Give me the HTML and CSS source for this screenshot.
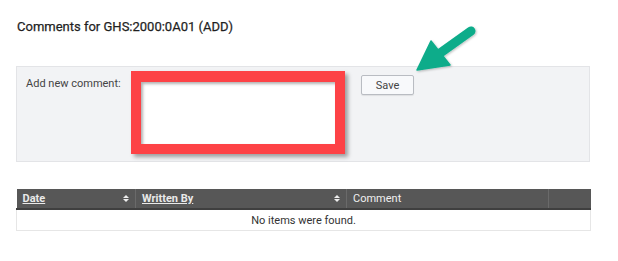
FILE: index.html
```html
<!DOCTYPE html>
<html lang="en">

<head>
    <meta charset="UTF-8" />
    <title>Comments</title>
    <link rel="stylesheet" href="styles.css">
</head>

<body>
    <h1 class="title">Comments for GHS:2000:0A01 (ADD)</h1>

    <div class="add-panel">
        <label class="add-label" for="comment">Add new comment:</label>
        <div class="highlight">
            <textarea id="comment" spellcheck="false"></textarea>
        </div>
        <button class="save-btn">Save</button>
    </div>

    <table class="grid">
        <colgroup>
            <col style="width: 119px">
            <col style="width: 211px">
            <col style="width: 202px">
            <col>
        </colgroup>
        <thead>
            <tr>
                <th><a href="#">Date</a><span class="sort"></span></th>
                <th><a href="#">Written By</a><span class="sort"></span></th>
                <th class="plain">Comment</th>
                <th></th>
            </tr>
        </thead>
        <tbody>
            <tr>
                <td colspan="4" class="empty">No items were found.</td>
            </tr>
        </tbody>
    </table>

    <!-- annotation arrow -->
    <svg class="arrow" width="80" height="64" viewBox="0 0 80 64">
        <defs>
            <filter id="sh" x="-20%" y="-20%" width="140%" height="140%">
                <feDropShadow dx="1" dy="1" stdDeviation="1" flood-color="#000" flood-opacity="0.25" />
            </filter>
        </defs>
        <g filter="url(#sh)" fill="#0bac8a" stroke="#0bac8a">
            <line x1="71" y1="11" x2="36" y2="36" stroke-width="9" stroke-linecap="round" />
            <polygon points="17,50 31,21 50,45" stroke-width="1.5" stroke-linejoin="round" />
        </g>
    </svg>
</body>

</html>
```

FILE: styles.css
```css
body {
    font-family: Roboto, "Liberation Sans", Arial, sans-serif;
    margin: 0;
    padding: 0 28px 0 16px;
    background-color: #fff;
    color: #333;
    position: relative;
}

.title {
    font-size: 13px;
    font-weight: 400;
    color: #1f1f1f;
    margin: 0;
    padding: 19px 0 0 1px;
    line-height: 16px;
    -webkit-text-stroke: 0.25px #1f1f1f;
}

.add-panel {
    display: flex;
    align-items: flex-start;
    margin-top: 31px;
    padding: 4px 0 7px 9px;
    background-color: #f2f3f5;
    border: 1px solid #e3e4e7;
}

.add-label {
    font-size: 11px;
    color: #444;
    width: 105px;
    padding-top: 6px;
    line-height: 14px;
}

.highlight {
    width: 194px;
    height: 62px;
    border: 10px solid #fd4246;
    border-top-width: 11px;
    box-shadow: 3px 3px 4px rgba(0, 0, 0, 0.35);
    background: #fff;
}

.highlight textarea {
    display: block;
    width: 100%;
    height: 100%;
    box-sizing: border-box;
    border: none;
    resize: none;
    outline: none;
    background: #fff;
    box-shadow: inset 2px 2px 3px rgba(0, 0, 0, 0.3);
}

.save-btn {
    margin: 4px 0 0 16px;
    width: 53px;
    height: 20px;
    padding: 0;
    font-family: inherit;
    font-size: 11px;
    color: #444;
    background: #f8f9fb;
    border: 1px solid #b9bcc2;
    border-radius: 2px;
    box-shadow: 0 1px 1px rgba(0, 0, 0, 0.08);
}

.grid {
    margin-top: 27px;
    width: 575px;
    border-collapse: collapse;
    table-layout: fixed;
    font-size: 11px;
}

.grid th {
    background: #575757;
    color: #e9e9e9;
    text-align: left;
    font-weight: 700;
    height: 19px;
    padding: 0 6px;
    border-right: 1px solid #6a6a6a;
    border-bottom: 2px solid #3f3f3f;
    position: relative;
}

.grid th:last-child {
    border-right: none;
}

.grid th a {
    color: #e9e9e9;
    text-decoration: underline;
}

.grid th.plain {
    font-weight: 400;
    color: #f0f0f0;
}

.sort {
    position: absolute;
    right: 6px;
    top: 6px;
    width: 0;
    height: 0;
    border-left: 3px solid transparent;
    border-right: 3px solid transparent;
    border-bottom: 3px solid #eee;
}

.sort::after {
    content: "";
    position: absolute;
    left: -3px;
    top: 4px;
    border-left: 3px solid transparent;
    border-right: 3px solid transparent;
    border-top: 3px solid #eee;
}

.grid td.empty {
    text-align: center;
    height: 18px;
    color: #333;
    border: 1px solid #e6e6e6;
    border-top: none;
}

.arrow {
    position: absolute;
    left: 400px;
    top: 20px;
}
```
